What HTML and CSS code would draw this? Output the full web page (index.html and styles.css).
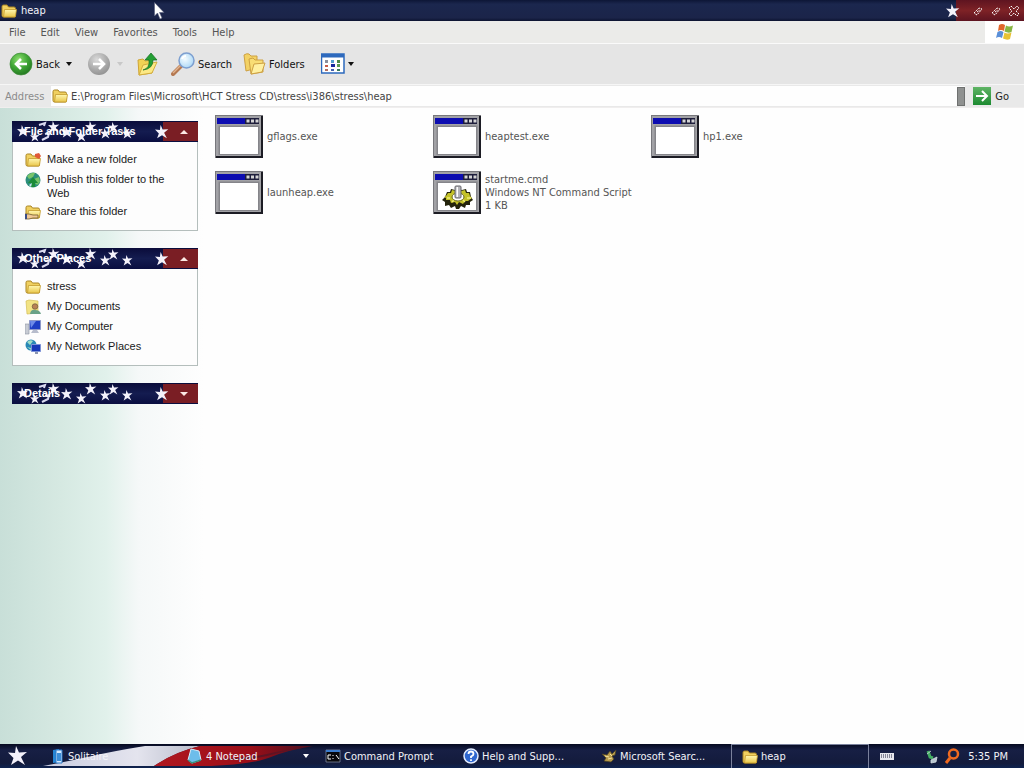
FILE: index.html
```html
<!DOCTYPE html>
<html lang="en">
<head>
<meta charset="utf-8">
<title>heap</title>
<link rel="stylesheet" href="styles.css">
</head>
<body>
<svg class="defs" aria-hidden="true">
  <defs>
    <linearGradient id="gFolder" x1="0" y1="0" x2="0" y2="1"><stop offset="0" stop-color="#fff7b0"/><stop offset="1" stop-color="#e9c64a"/></linearGradient>
    <radialGradient id="gGreen" cx=".4" cy=".3" r=".8"><stop offset="0" stop-color="#8fe070"/><stop offset=".5" stop-color="#3fa535"/><stop offset="1" stop-color="#1d6e1c"/></radialGradient>
    <radialGradient id="gGray" cx=".4" cy=".3" r=".8"><stop offset="0" stop-color="#dadada"/><stop offset=".6" stop-color="#a8a8a8"/><stop offset="1" stop-color="#8c8c8c"/></radialGradient>
    <radialGradient id="gLens" cx=".4" cy=".4" r=".7"><stop offset="0" stop-color="#f4fcff"/><stop offset="1" stop-color="#a5d4f5"/></radialGradient>
    <linearGradient id="gGo" x1="0" y1="0" x2="0" y2="1"><stop offset="0" stop-color="#5fb465"/><stop offset="1" stop-color="#1c8a30"/></linearGradient>
    <linearGradient id="gWhite" x1="0" y1="0" x2="1" y2="0"><stop offset="0" stop-color="#c9cce0"/><stop offset=".6" stop-color="#e4e4ee"/><stop offset="1" stop-color="#b8bccb"/></linearGradient>
    <linearGradient id="gRed" x1="0" y1="0" x2="1" y2="0"><stop offset="0" stop-color="#b01820"/><stop offset=".6" stop-color="#9c0e18"/><stop offset="1" stop-color="#4a1020"/></linearGradient>
  </defs>
  <symbol id="star" viewBox="0 0 20 20"><path d="M8 0 11 6.500 19 6 13 11 17 19 10 14.500 3 19 5.500 12 0 6.500 7 7z" fill="#f4f2fb"/></symbol>
  <symbol id="folder" viewBox="0 0 16 16"><path d="M1 3.500Q1 2 2.500 2H6l1.500 2H13q1.500 0 1.500 1.500V13q0 1-1 1h-11q-1.500 0-1.500-1.500z" fill="#f0d060" stroke="#a98422"/><path d="M3.500 6.500h12L14.500 13q0 1-1 1H2.500z" fill="url(#gFolder)" stroke="#c39a2c" stroke-width=".8"/></symbol>
  <symbol id="exe" viewBox="0 0 48 43"><path d="M0 0h48v43H0z" fill="#77777c"/><path d="M46 1h2v42H1v-2h45z" fill="#1c1c24"/><path d="M1 1h45v40H1z" fill="#a2a2a6"/><path d="M2 3h42v6H2z" fill="#0c0cb0"/><path d="M30 3h14v6H30z" fill="#1e1e3c"/><path d="M31.500 4.500h3v3h-3zm4.500 0h3v3h-3zm4.500 0h3v3h-3z" fill="#d4d4d4"/><path d="M3.500 10.500h41V40h-41z" fill="#85858a"/><path d="M5 12h38v27H5z" fill="#fff"/></symbol>
  <symbol id="gear" viewBox="0 0 48 43"><use href="#exe"/>
    <path d="m12 26 2-5h3l1-3 4 1 3-1 4 1 4-1 1 3h3l1 5 2 3-3 2v3h-4l-1 3-4-2-2 3h-3l-1-3-4 2-2-3-4 1v-4l-3-2z" fill="#24240c"/>
    <path d="m13 25 2-3h3l1-3 4 1h5l4-1 1 3h3l1 3 2 2-4 3h-3l-2 3-4-2-2 3-2-3-4 1-1-3h-4v-2l-2-1z" fill="#c4c228"/>
    <path d="M14 27h3m17 0h4M19 31l2-2m9 0 2 2" stroke="#eeec78" stroke-width="1.500"/>
    <ellipse cx="25" cy="26" rx="6" ry="4" fill="#fff" stroke="#66661c"/>
    <rect x="22" y="15" width="6" height="12" rx="1" fill="#b4b4b9" stroke="#66666c"/><path d="M23.500 16H25v10h-1.500z" fill="#fff"/></symbol>
  <symbol id="starfield" viewBox="0 0 186 21">
    <use href="#star" x="5" y="4" width="12" height="12"/><use href="#star" x="18" y="11" width="10" height="10"/><path d="m27 4 6-2-1 3m1 8 4-1-1 4-6 3" stroke="#dadaf0" stroke-width="2" fill="none"/><use href="#star" x="36" y="0" width="12" height="12"/><use href="#star" x="49" y="5" width="12" height="12"/><use href="#star" x="64" y="10" width="11" height="11"/><use href="#star" x="73" y="0" width="12" height="12"/><use href="#star" x="88" y="7" width="11" height="11"/><use href="#star" x="96" y="1" width="11" height="11"/><use href="#star" x="110" y="7" width="11" height="11"/>
    <path d="M151 1h35v19h-35z" fill="#7a1e24"/><use href="#star" x="143" y="4" width="14" height="14"/>
  </symbol>
</svg>

<div class="window">
  <header class="titlebar">
    <svg class="i16"><use href="#folder"/></svg>
    <h1 class="title">heap</h1>
    <svg class="title-star"><use href="#star"/></svg>
    <div class="captions">
      <button class="caption" aria-label="Minimize"><svg viewBox="0 0 12 12"><path d="m2 8 5-5 3 1-5 6zM5 7l3-2" fill="none" stroke="#fff" stroke-dasharray="2 1"/></svg></button>
      <button class="caption" aria-label="Restore"><svg viewBox="0 0 12 12"><path d="m2 8 5-5 3 1-5 6zM5 7l3-2" fill="none" stroke="#fff" stroke-dasharray="2 1"/></svg></button>
      <button class="caption" aria-label="Close"><svg viewBox="0 0 12 12"><path d="M3 1 6 4l3-3 2 2-3 3 3 3-2 2-3-3-3 3-2-2 3-3-3-3z" fill="none" stroke="#fff" stroke-dasharray="2 1"/></svg></button>
    </div>
    <svg class="pointer" viewBox="0 0 11 18"><path d="M.5.500V14l3-3 2.500 6 2-1-2.500-5.500H10z" fill="#fff" stroke="#555a78" stroke-width=".6"/></svg>
  </header>

  <nav class="menubar">
    <button>File</button><button>Edit</button><button>View</button><button>Favorites</button><button>Tools</button><button>Help</button>
    <div class="throbber"><svg viewBox="0 0 20 18"><path d="M4 2q3-2 6 0L9 8q-3-2-6 0z" fill="#e0662c"/><path d="M11 2.500q3 2 7 0L16.500 9q-3 1.500-7-.5z" fill="#87b542"/><path d="M2.500 9q3-2 6 0L7 15q-3-2-6 0z" fill="#5a8fd8"/><path d="M9.500 9.500q3 2 7 0L15 16q-3 1.500-7-.5z" fill="#e8c234"/></svg></div>
  </nav>

  <div class="toolbar">
    <button class="tool back"><svg class="i24" viewBox="0 0 24 24"><circle cx="12" cy="12" r="11" fill="url(#gGreen)" stroke="#3b8a35" stroke-width=".7"/><path d="M18 12H7m5-5-5 5 5 5" fill="none" stroke="#fff" stroke-width="2.600"/></svg><span>Back</span><i class="caret"></i></button>
    <button class="tool forward" aria-label="Forward" disabled><svg class="i24" viewBox="0 0 24 24"><circle cx="12" cy="12" r="11" fill="url(#gGray)"/><path d="M6 12h11m-5-5 5 5-5 5" fill="none" stroke="#fff" stroke-width="2.600"/></svg><i class="caret dim"></i></button>
    <button class="tool up" aria-label="Up"><svg class="i24" viewBox="0 0 24 24"><path d="m3 8 5-1 2 2 7-1v13L4 23z" fill="#f1d254" stroke="#cfa536"/><path d="m4 23 4-10 14-3-5 11z" fill="#fce985" stroke="#d3ad3e"/><path d="M8 18q7-2 6-10h-4l6-7 6 7h-4q0 9-10 10z" fill="#24a035" stroke="#176e23" stroke-width=".7"/></svg></button>
    <button class="tool search"><svg class="i24" viewBox="0 0 24 24"><path d="m2 22 8-8" stroke="#b57952" stroke-width="4" stroke-linecap="round"/><path d="m2 21 8-8" stroke="#e2b48e" stroke-width="1.500"/><circle cx="15.500" cy="8.500" r="7.500" fill="url(#gLens)" stroke="#7d9fd0" stroke-width="1.500"/><path d="M11 7q1-3 4-3" stroke="#fff" stroke-width="2" fill="none"/></svg><span>Search</span></button>
    <button class="tool folders"><svg class="i24" viewBox="0 0 24 24"><path d="M2 3q3-2 5-1l2 2h6v12L4 19z" fill="#f3d265" stroke="#cda043"/><path d="m7 7 4-1 2 2h8v12L9 22z" fill="#f8dd75" stroke="#cda043"/><path d="m9 22 3-10 11-1-3 9z" fill="#fff0a1" stroke="#cda043"/></svg><span>Folders</span></button>
    <button class="tool views" aria-label="Views"><svg class="i24" viewBox="0 0 24 24"><path d="M.500 2h22.500v19H.500z" fill="#fff" stroke="#2d69bd" stroke-width="1.500"/><path d="M.500 2h22.500v3.500H.500z" fill="#2d69bd"/><path d="M4 8h3v3H4z" fill="#8a8f9c"/><path d="M10 8h3v3h-3z" fill="#52a0cf"/><path d="M16 8h3v3h-3z" fill="#4c8b48"/><path d="M4 13h3v2H4z" fill="#c95b45"/><path d="M10 12h4v3h-4z" fill="#182a9c"/><path d="M16 12h3v3h-3z" fill="#5b9c50"/><path d="M4 17h3v2H4z" fill="#b37162"/><path d="M10 17h3v2h-3z" fill="#445fae"/><path d="M16 17h3v2h-3z" fill="#3a7a58"/></svg><i class="caret"></i></button>
  </div>

  <form class="address">
    <label for="path">Address</label>
    <div class="field"><svg class="i16"><use href="#folder"/></svg><input id="path" type="text" value="E:\Program Files\Microsoft\HCT Stress CD\stress\i386\stress\heap"><button type="button" class="drop" aria-label="Show history"></button></div>
    <button type="button" class="go"><svg class="i18" viewBox="0 0 18 18"><path d="M0 0h18v18H0z" fill="url(#gGo)"/><path d="M3 9h11M9 4l5 5-5 5" fill="none" stroke="#fff" stroke-width="2"/></svg><span>Go</span></button>
  </form>

  <main class="content">
    <aside class="sidebar">
      <section class="panel">
        <button class="panel-head"><svg class="stars" viewBox="0 0 186 21" preserveAspectRatio="none"><use href="#starfield"/></svg><span>File and Folder Tasks</span><i class="chev up-chev"></i></button>
        <ul class="panel-body">
          <li><a href="#"><svg class="i16"><use href="#folder"/><path d="m10 2 4-1 2 3-2 3-4-2z" fill="#e05a38"/></svg><span>Make a new folder</span></a></li>
          <li><a href="#"><svg class="i16" viewBox="0 0 16 16"><circle cx="8" cy="8" r="7.500" fill="#2c8e7c"/><path d="M2 4q4-4 8-3l-2 4-4 2zM9 7l5-2 1 5-3 3-3-3z" fill="#78c46a"/><path d="M8 5 3 11h3v4h4v-4h3z" fill="#1b8b38"/><path d="m4 13 3-2-1 4z" fill="#c7e5ee"/></svg><span>Publish this folder to the Web</span></a></li>
          <li><a href="#"><svg class="i16" viewBox="0 0 16 16"><use href="#folder"/><path d="M0 10h4l4 1h5v3H8l-4 1H0z" fill="#f0c894" stroke="#6f5a30" stroke-width=".8"/><path d="M0 10h2v5H0z" fill="#3b4d86"/></svg><span>Share this folder</span></a></li>
        </ul>
      </section>
      <section class="panel">
        <button class="panel-head"><svg class="stars" viewBox="0 0 186 21" preserveAspectRatio="none"><use href="#starfield"/></svg><span>Other Places</span><i class="chev up-chev"></i></button>
        <ul class="panel-body">
          <li><a href="#"><svg class="i16"><use href="#folder"/></svg><span>stress</span></a></li>
          <li><a href="#"><svg class="i16" viewBox="0 0 16 16"><path d="m1 2 3-1 9 1v12l-11 1z" fill="#f2e384" stroke="#d4bd55" stroke-width=".7"/><circle cx="10" cy="7.500" r="2.800" fill="#b78154" stroke="#5f4d36" stroke-width=".6"/><path d="M5 15q1-5 5-4 5 0 6 4z" fill="#6aa288"/></svg><span>My Documents</span></a></li>
          <li><a href="#"><svg class="i16" viewBox="0 0 16 16"><path d="M0 5h4v10H0z" fill="#c8ccd4" stroke="#8e95a2" stroke-width=".6"/><path d="M4.500 1.500h11v9h-11z" fill="#1e3fc4" stroke="#8d98c8"/><path d="m5 2 6 0-5 7z" fill="#6d8be8"/><path d="M8 11h4l2 3H6z" fill="#b7bccc"/></svg><span>My Computer</span></a></li>
          <li><a href="#"><svg class="i16" viewBox="0 0 16 16"><circle cx="6" cy="6" r="5.500" fill="#2888b6"/><path d="M2 3q3-3 6-1L5 6zM2 8l4 1 0 2z" fill="#9fdcc6"/><path d="M6.500 5.500h9v7h-9z" fill="#1738b8" stroke="#7d92d6"/><path d="M10 13h3v2h-3z" fill="#8c96b0"/></svg><span>My Network Places</span></a></li>
        </ul>
      </section>
      <section class="panel">
        <button class="panel-head"><svg class="stars" viewBox="0 0 186 21" preserveAspectRatio="none"><use href="#starfield"/></svg><span>Details</span><i class="chev down-chev"></i></button>
      </section>
    </aside>
    <ul class="files">
      <li><svg class="big"><use href="#exe"/></svg><div>gflags.exe</div></li>
      <li><svg class="big"><use href="#exe"/></svg><div>heaptest.exe</div></li>
      <li><svg class="big"><use href="#exe"/></svg><div>hp1.exe</div></li>
      <li><svg class="big"><use href="#exe"/></svg><div>launheap.exe</div></li>
      <li><svg class="big"><use href="#gear"/></svg><div>startme.cmd<br>Windows NT Command Script<br>1 KB</div></li>
    </ul>
  </main>

  <footer class="taskbar">
    <svg class="ribbon" viewBox="0 0 320 23"><path d="M43 21Q70 16 92 11T145 1h55q-25 6-46 20z" fill="url(#gWhite)"/><path d="M154 21Q174 7 200 1h113q-25 4-42 11t-60 9z" fill="url(#gRed)"/><path d="M205 14q40 2 62-3 20-6 42-9-22 2-42 7-30 6-62 5z" fill="#5c1424"/></svg>
    <button class="start" aria-label="Start"><svg><use href="#star"/></svg></button>
    <div class="tasks">
      <button><svg class="i16" viewBox="0 0 16 16"><path d="M4 2 10 1v13l-6 1z" fill="#2585d5"/><path d="m7 2 6 0v13H7z" fill="#d4eaff" stroke="#2b78c8"/><path d="M8 5h4v8H8z" fill="#3c8ed8"/></svg><span>Solitaire</span></button>
      <button><svg class="i16" viewBox="0 0 16 16"><path d="m4 1 8 2 2 9-9 3-4-3z" fill="#6dbdea" stroke="#d7effc"/><path d="m1 12 4 3 9-3" fill="none" stroke="#368d7d" stroke-width="1.500"/></svg><span>4 Notepad</span><i class="caret light"></i></button>
      <button><svg class="i16" viewBox="0 0 16 16"><path d="M1 2h14v12H1z" fill="#08080c" stroke="#8a96aa" stroke-width=".7"/><path d="M1 2h14v2H1z" fill="#3b7bcc"/><path d="M6 7H3v4h3M8 7v1m0 2v1m3-4 3 4" fill="none" stroke="#fff"/></svg><span>Command Prompt</span></button>
      <button><svg class="i16" viewBox="0 0 16 16"><circle cx="8" cy="8" r="7" fill="#2f67cf" stroke="#e4eeff" stroke-width="1.500"/><path d="M5.500 6q0-2.500 2.500-2.500T10.500 6Q10.500 7.500 8 8.500v1.500m0 1.200v1.800" fill="none" stroke="#fff" stroke-width="1.800"/></svg><span>Help and Supp...</span></button>
      <button><svg class="i16" viewBox="0 0 16 16"><path d="m1 6 5 1 3-4 2 3 4-4-1 5-3 1 2 3-3 3-7-1 2-3z" fill="#b79b4c" stroke="#4b4020" stroke-width=".7"/><path d="m4 8 4 1m1-3 2 2m-4 3 4-1" stroke="#f3e2a0"/></svg><span>Microsoft Searc...</span></button>
      <button class="active"><svg class="i16"><use href="#folder"/></svg><span>heap</span></button>
    </div>
    <button class="lang" aria-label="Keyboard"><svg viewBox="0 0 14 8"><path d="M0 1h14v7H0z" fill="#e8e8ee"/><path d="M1 3h12M1 5h12" stroke="#20203c" stroke-dasharray="1 1"/></svg></button>
    <div class="tray">
      <svg class="i16" viewBox="0 0 16 16"><path d="m4 3 2 6 3 1" fill="none" stroke="#43ae62" stroke-width="3"/><path d="m3 6 4-3m0 9 6-3-1 5-5 1z" fill="#b9c6d0" stroke="#d5e2e5" stroke-width=".8"/></svg>
      <svg class="i16" viewBox="0 0 16 16"><circle cx="9.500" cy="6" r="4.500" fill="none" stroke="#f06a20" stroke-width="2.500"/><path d="m6 10-4 5" stroke="#f06a20" stroke-width="3"/></svg>
      <time>5:35 PM</time>
    </div>
  </footer>
</div>
</body>
</html>
```

FILE: styles.css
```css
* { box-sizing: border-box; }
body { margin: 0; font: 11px/13px "DejaVu Sans Condensed", "DejaVu Sans", sans-serif; font-stretch: condensed; color: #111; background: #fefefe; }
button { font: inherit; color: inherit; background: none; border: 0; padding: 0; margin: 0; text-align: left; }
ul { list-style: none; margin: 0; padding: 0; }
svg { display: block; flex: none; }
.defs { position: absolute; width: 0; height: 0; }
.i16 { width: 16px; height: 16px; }
.i18 { width: 18px; height: 18px; }
.i24 { width: 24px; height: 24px; }
.window { display: flex; flex-direction: column; min-height: 100vh; }

.titlebar { position: relative; display: flex; align-items: center; height: 21px; padding-left: 1px; gap: 4px; background: linear-gradient(#0d1636, #1b274e 20%, #1b2449 85%, #0c1330); color: #f4f4fa; }
.title { margin: 0; font-size: 11px; font-weight: normal; flex: 1; }
.title-star { width: 14px; height: 14px; z-index: 1; }
.captions { display: flex; align-items: center; align-self: stretch; gap: 6px; margin-left: -8px; padding: 0 4px 0 16px; background: linear-gradient(#5e1420, #7e2226 50%, #5d1420); }
.caption svg { width: 12px; height: 12px; }
.pointer { position: absolute; left: 154px; top: 2px; width: 11px; height: 18px; z-index: 2; }

.menubar { display: flex; align-items: center; height: 23px; padding-left: 9px; gap: 15px; background: #ebebe9; color: #555; border-bottom: 1px solid #fafafa; }
.throbber { margin-left: auto; align-self: stretch; width: 39px; background: #fff; display: flex; align-items: center; justify-content: center; }
.throbber svg { width: 20px; height: 18px; }

.toolbar { display: flex; align-items: center; height: 41px; padding-left: 9px; background: #e5e5e5; border-bottom: 1px solid #f6f6f6; }
.tool { display: flex; align-items: center; gap: 3px; }
.caret { width: 0; height: 0; border: 3px solid transparent; border-top: 4px solid #111; border-bottom: 0; margin-left: 3px; }
.caret.dim { border-top-color: #c8c8c8; }
.caret.light { border-top-color: #fff; margin: 0 8px 0 auto; }
.forward { margin-left: 15px; }
.up { margin-left: 12px; }
.search { margin-left: 12px; }
.folders { margin-left: 10px; }
.views { margin-left: 16px; }
.views .caret { margin-left: 0; }

.address { display: flex; align-items: center; height: 22px; padding: 0 15px 0 5px; background: #e9e9e9; color: #8b8b8b; }
.address label { width: 46px; }
.field { flex: 1; display: flex; align-items: center; height: 20px; padding-left: 1px; background: #fefefe; }
.field input { flex: 1; min-width: 0; height: 18px; border: 0; outline: 0; padding: 0 0 0 3px; background: transparent; font: inherit; color: #444; }
.drop { width: 8px; height: 19px; background: #8f9190; border: 1px solid #6f7170; }
.go { display: flex; align-items: center; gap: 4px; margin-left: 8px; color: #222; }

.content { flex: 1; display: flex; border-top: 1px solid #f0eeee; background: #fefefe; }
.sidebar { width: 204px; flex: none; padding: 13px 6px 17px 12px; display: flex; flex-direction: column; gap: 17px; background: linear-gradient(90deg, #c8dfd8, #d6e9e2 30%, #e1f1eb 52%, #f5f8f8 68%, #fbfcfc 90%, #fefefe); font-family: "Liberation Sans", Arial, sans-serif; }
.panel-head { position: relative; display: flex; align-items: center; width: 100%; height: 21px; padding: 0 10px 0 12px; background: linear-gradient(#0a0c3a, #141c50 50%, #0a0e40); color: #fff; font-weight: bold; }
.stars { position: absolute; inset: 0; width: 100%; height: 100%; }
.panel-head span, .chev { position: relative; }
.chev { margin-left: auto; width: 0; height: 0; border: 4px solid transparent; }
.up-chev { border-bottom-color: #fbe9e4; border-top: 0; }
.down-chev { border-top-color: #fbe9e4; border-bottom: 0; }
.panel-body { padding: 8px 12px; border: 1px solid #b4bebc; border-top: 0; background: #fdfdfd; }
.panel-body a { display: flex; gap: 6px; padding: 2px 0; color: #1a1a1a; text-decoration: none; }
.panel-body span { line-height: 14px; }

.files { flex: 1; display: grid; grid-template-columns: repeat(auto-fill, 218px); grid-auto-rows: 56px; align-content: start; padding: 0 0 0 11px; color: #555; }
.files li { display: flex; align-items: center; gap: 4px; white-space: nowrap; }
.big { width: 48px; height: 43px; }

.taskbar { position: relative; display: flex; align-items: center; height: 24px; padding-right: 16px; background: linear-gradient(#060a20, #171f44 25%, #131b3c 80%, #0e2350); color: #f2f2f8; }
.ribbon { position: absolute; left: 0; top: 1px; width: 320px; height: 23px; }
.start { position: relative; flex: none; width: 41px; padding-left: 8px; }
.start svg { width: 20px; height: 20px; }
.tasks { position: relative; flex: 1; align-self: stretch; display: flex; }
.tasks button { flex: 0 1 138px; display: flex; align-items: center; gap: 3px; padding-left: 8px; min-width: 0; white-space: nowrap; }
.tasks .active { padding-left: 10px; border: 1px solid #7a819c; border-bottom: 0; }
.lang { margin-right: 30px; }
.lang svg { width: 14px; height: 8px; }
.tray { display: flex; align-items: center; gap: 4px; }
.tray time { margin-left: 4px; }
```
